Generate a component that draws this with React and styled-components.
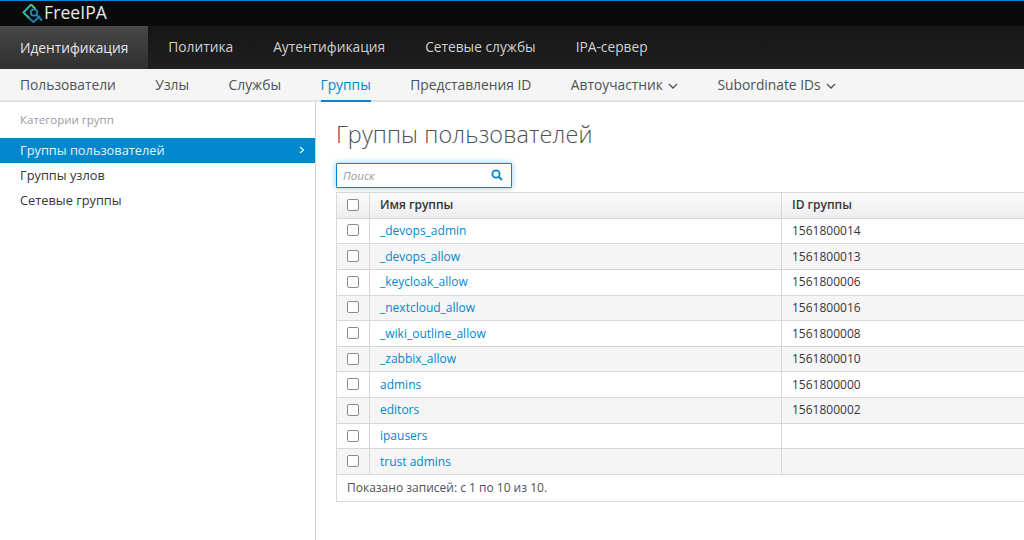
import React from 'react';
import styled, { createGlobalStyle } from 'styled-components';

const Global = createGlobalStyle`
  html, body { margin: 0; padding: 0; background: #fff; overflow: hidden; }
  body { font-family: "Open Sans", "Noto Sans", sans-serif; color: #363636; }
  * { box-sizing: border-box; }
`;
const Page = styled.div`width: 1024px; height: 540px; display: flex; flex-direction: column; overflow: hidden;`;
const Brand = styled.header`
  height: 26px; flex: none; background: #0a0a0a; border-top: 1px solid #0088ce;
  padding: 0 0 3px 21px; display: flex; align-items: center; gap: 1px;
`;
const BrandName = styled.span`color: #e8e8e8; font-size: 17.5px; line-height: 22px; letter-spacing: 0.1px;`;
const Primary = styled.nav`
  height: 43px; flex: none; display: flex; background: linear-gradient(#161616, #1f1f1f);
`;
const PrimaryItem = styled.a`
  display: flex; align-items: center; padding: 0 20px 2px; font-size: 13.75px; color: #d1d1d1;
  ${p => p.$active && `background: linear-gradient(#474747, #2f2f2f); color: #e6e6e6; border-top: 1px solid #4c4c4c;`}
`;
const Secondary = styled.nav`
  height: 33px; flex: none; display: flex; gap: 39.5px; padding-left: 20px;
  background: #f5f5f5; border-bottom: 2px solid #e2e2e2;
`;
const SecondaryItem = styled.a`
  display: flex; align-items: center; gap: 5px; height: 33px; padding-bottom: 3px; font-size: 13.8px; color: ${p => (p.$active ? '#0088ce' : '#4d5258')};
  ${p => p.$active && `border-bottom: 2px solid #0088ce; padding-bottom: 1px;`}
`;
const Body = styled.div`flex: 1; display: flex; min-height: 0;`;
const Side = styled.aside`
  width: 316px; flex: none; border-right: 1px solid #d1d1d1; background: #fff; padding-top: 9px;
`;
const SideTitle = styled.div`font-size: 11.5px; color: #9c9c9c; padding-left: 20px; line-height: 17px; margin-bottom: 10px;`;
const SideItem = styled.a`
  display: flex; align-items: center; justify-content: space-between; height: 24.8px; padding: 0 10px 0 20px;
  font-size: 12.8px; color: ${p => (p.$active ? '#e8f3fa' : '#363636')};
  background: ${p => (p.$active ? '#0088ce' : 'transparent')};
`;
const Main = styled.main`flex: 1; padding: 16px 0 0 20px; min-width: 0; overflow: hidden;`;
const Title = styled.h1`margin: 0 0 13px; font-weight: 300; font-size: 23.4px; line-height: 32px; color: #4d5258; letter-spacing: 0.12px; font-family: "Open Sans", sans-serif;`;
const Search = styled.div`
  width: 176px; height: 25px; display: flex; align-items: center; justify-content: space-between;
  padding: 0 8px 1px 6px; border: 1px solid #0088ce; border-radius: 1px; background: #fff;
  box-shadow: 0 0 6px rgba(0, 136, 206, 0.45);
`;
const Hint = styled.span`font-size: 11.5px; font-style: italic; color: #9a9a9a;`;
const Table = styled.table`
  margin-top: 4px; width: 760px; border-collapse: collapse; table-layout: fixed; border: 1px solid #d8d8d8;
  font-size: 12px; color: #363636;
`;
const Row = styled.tr`height: 25.65px; background: ${p => (p.$odd ? '#f5f5f5' : '#fff')};`;
const HeadRow = styled.tr`height: 25.65px; background: linear-gradient(#fafafa, #ededed);`;
const Th = styled.th`
  padding: 0 10px 1px; text-align: left; font-weight: 600; font-size: 12px; border: 1px solid #d8d8d8; color: #363636;
`;
const Td = styled.td`padding: 0 10px; border: 1px solid #d8d8d8; line-height: 16px;`;
const CheckCell = styled.td`padding: 0 0 1px; border: 1px solid #d8d8d8;`;
const CheckHead = styled.th`padding: 0 0 1px; border: 1px solid #d8d8d8;`;
const Box = styled.span`
  display: block; margin: 0 auto; width: 12px; height: 12px; border: 1px solid #8a8a8a; border-radius: 2px; background: #fff;
`;
const GroupLink = styled.a`color: #0088ce;`;
const Foot = styled.td`padding: 0 10px; height: 26.6px; background: #fff; border: 1px solid #d8d8d8; font-size: 12px; color: #4d5258;`;

const Logo = () => (
  <svg width="22" height="21" viewBox="0 0 22 21" fill="none">
    <path d="M10 2.5 L2.5 10.5 L8.5 16.5" stroke="#35b5a5" strokeWidth="2" />
    <path d="M10 2.5 L14.5 7" stroke="#7fc24c" strokeWidth="2" />
    <circle cx="13" cy="10.5" r="3.2" stroke="#1c8cc0" strokeWidth="1.8" />
    <path d="M8.5 16.5 L12.5 20 L19 14" stroke="#1c7fb0" strokeWidth="2" />
    <path d="M15.3 12.8 L21 18.5" stroke="#1c7fb0" strokeWidth="2" />
  </svg>
);
const Chevron = () => (
  <svg width="10" height="6" viewBox="0 0 10 6" fill="none" style={{ marginTop: 3 }}>
    <path d="M1 1 L5 5 L9 1" stroke="#4d5258" strokeWidth="1.3" />
  </svg>
);
const SideChevron = () => (
  <svg width="6" height="8" viewBox="0 0 6 8" fill="none">
    <path d="M1 1 L4.5 4 L1 7" stroke="#e8f3fa" strokeWidth="1.3" />
  </svg>
);
const SearchIcon = () => (
  <svg width="12" height="12" viewBox="0 0 12 12" fill="none">
    <circle cx="5" cy="5" r="3.6" stroke="#0088ce" strokeWidth="1.8" />
    <path d="M7.8 7.8 L11 11" stroke="#0088ce" strokeWidth="2" />
  </svg>
);

const groups = [
  ['_devops_admin', '1561800014'], ['_devops_allow', '1561800013'], ['_keycloak_allow', '1561800006'],
  ['_nextcloud_allow', '1561800016'], ['_wiki_outline_allow', '1561800008'], ['_zabbix_allow', '1561800010'],
  ['admins', '1561800000'], ['editors', '1561800002'], ['ipausers', ''], ['trust admins', ''],
];

export default function App() {
  return (
    <Page>
      <Global />
      <Brand><Logo /><BrandName>FreeIPA</BrandName></Brand>
      <Primary>
        <PrimaryItem $active>Идентификация</PrimaryItem>
        <PrimaryItem>Политика</PrimaryItem>
        <PrimaryItem>Аутентификация</PrimaryItem>
        <PrimaryItem>Сетевые службы</PrimaryItem>
        <PrimaryItem>IPA-сервер</PrimaryItem>
      </Primary>
      <Secondary>
        <SecondaryItem>Пользователи</SecondaryItem>
        <SecondaryItem>Узлы</SecondaryItem>
        <SecondaryItem>Службы</SecondaryItem>
        <SecondaryItem $active>Группы</SecondaryItem>
        <SecondaryItem>Представления ID</SecondaryItem>
        <SecondaryItem>Автоучастник <Chevron /></SecondaryItem>
        <SecondaryItem>Subordinate IDs <Chevron /></SecondaryItem>
      </Secondary>
      <Body>
        <Side>
          <SideTitle>Категории групп</SideTitle>
          <SideItem $active>Группы пользователей <SideChevron /></SideItem>
          <SideItem>Группы узлов</SideItem>
          <SideItem>Сетевые группы</SideItem>
        </Side>
        <Main>
          <Title>Группы пользователей</Title>
          <Search><Hint>Поиск</Hint><SearchIcon /></Search>
          <Table>
            <colgroup><col style={{ width: 33 }} /><col style={{ width: 412 }} /><col /></colgroup>
            <thead>
              <HeadRow>
                <CheckHead><Box /></CheckHead>
                <Th>Имя группы</Th>
                <Th>ID группы</Th>
              </HeadRow>
            </thead>
            <tbody>
              {groups.map(([name, id], i) => (
                <Row key={name} $odd={i % 2 === 1}>
                  <CheckCell><Box /></CheckCell>
                  <Td><GroupLink>{name}</GroupLink></Td>
                  <Td>{id}</Td>
                </Row>
              ))}
            </tbody>
            <tfoot>
              <tr><Foot colSpan={3}>Показано записей: с 1 по 10 из 10.</Foot></tr>
            </tfoot>
          </Table>
        </Main>
      </Body>
    </Page>
  );
}
